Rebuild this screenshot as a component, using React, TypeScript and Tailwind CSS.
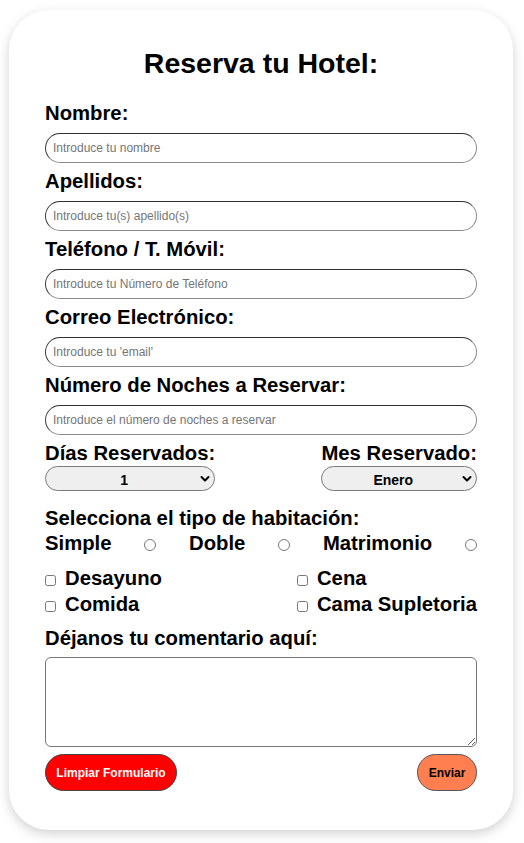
import React from "react";

const font = "font-['Liberation_Sans',Arial,Helvetica,sans-serif]";

function Chevron() {
  return (
    <svg
      className="pointer-events-none absolute right-[5px] top-1/2 -translate-y-1/2"
      width="10"
      height="7"
      viewBox="0 0 10 7"
      fill="none"
    >
      <path d="M1.5 1.5 L5 5 L8.5 1.5" stroke="#000" strokeWidth="2" strokeLinecap="round" strokeLinejoin="round" />
    </svg>
  );
}

function Field({ label, placeholder, first }: { label: string; placeholder: string; first?: boolean }) {
  return (
    <div className={first ? "mt-[23px]" : "mt-[7px]"}>
      <label className="block text-[20.3px] leading-[23px] font-bold text-black">{label}</label>
      <input
        type="text"
        placeholder={placeholder}
        className="mt-2 block h-[30px] w-full rounded-full border border-t-[#2e2e2e] border-l-[#3a3a3a] border-b-[#8a8a8a] border-r-[#8a8a8a] bg-white pl-[7px] text-[12px] text-black outline-none placeholder:text-[#757575]"
      />
    </div>
  );
}

export default function App() {
  return (
    <div className={`${font} min-h-[843px] w-[524px] bg-white pt-[10px]`}>
      <div className="ml-[9px] w-[504px] rounded-[40px] bg-white px-[36px] pt-[37px] pb-[39px] shadow-[0_4px_12px_rgba(0,0,0,0.18)]">
        <h1 className="text-center text-[28.5px] leading-[32px] font-bold text-black">Reserva tu Hotel:</h1>

        <Field first label="Nombre:" placeholder="Introduce tu nombre" />
        <Field label="Apellidos:" placeholder="Introduce tu(s) apellido(s)" />
        <Field label="Teléfono / T. Móvil:" placeholder="Introduce tu Número de Teléfono" />
        <Field label="Correo Electrónico:" placeholder="Introduce tu 'email'" />
        <Field label="Número de Noches a Reservar:" placeholder="Introduce el número de noches a reservar" />

        <div className="mt-[7px] flex justify-between">
          <div className="flex w-fit flex-col">
            <label className="text-[20.3px] leading-[23px] font-bold text-black">Días Reservados:</label>
            <div className="relative mt-[1px] h-[25px] w-full">
              <select className="h-[25px] w-full appearance-none rounded-full border border-[#7a7a7a] bg-[#efefef] pt-[3px] pr-[12px] text-center text-[14px] font-bold text-black outline-none">
                <option>1</option>
                <option>2</option>
                <option>3</option>
              </select>
              <Chevron />
            </div>
          </div>
          <div className="flex w-fit flex-col">
            <label className="text-[20.3px] leading-[23px] font-bold text-black">Mes Reservado:</label>
            <div className="relative mt-[1px] h-[25px] w-full">
              <select className="h-[25px] w-full appearance-none rounded-full border border-[#7a7a7a] bg-[#efefef] pt-[3px] pr-[12px] text-center text-[14px] font-bold text-black outline-none">
                <option>Enero</option>
                <option>Febrero</option>
              </select>
              <Chevron />
            </div>
          </div>
        </div>

        <div className="mt-[16px] text-[20.3px] leading-[23px] font-bold text-black">Selecciona el tipo de habitación:</div>
        <div className="mt-[2px] flex items-center justify-between text-[20.3px] leading-[23px] font-bold text-black">
          <span>Simple</span>
          <input type="radio" name="hab" className="mt-[3px] h-[12px] w-[12px]" />
          <span>Doble</span>
          <input type="radio" name="hab" className="mt-[3px] h-[12px] w-[12px]" />
          <span>Matrimonio</span>
          <input type="radio" name="hab" className="mt-[3px] h-[12px] w-[12px]" />
        </div>

        <div className="mt-[12px] flex justify-between text-[20.3px] leading-[23px] font-bold text-black">
          <div className="flex flex-col gap-[3px]">
            <label className="flex items-center">
              <input type="checkbox" className="mt-[3px] mr-[9px] h-[11px] w-[11px]" />
              Desayuno
            </label>
            <label className="flex items-center">
              <input type="checkbox" className="mt-[3px] mr-[9px] h-[11px] w-[11px]" />
              Comida
            </label>
          </div>
          <div className="flex flex-col gap-[3px]">
            <label className="flex items-center">
              <input type="checkbox" className="mt-[3px] mr-[9px] h-[11px] w-[11px]" />
              Cena
            </label>
            <label className="flex items-center">
              <input type="checkbox" className="mt-[3px] mr-[9px] h-[11px] w-[11px]" />
              Cama Supletoria
            </label>
          </div>
        </div>

        <div className="mt-[11px] text-[20.3px] leading-[23px] font-bold text-black">Déjanos tu comentario aquí:</div>
        <textarea className="mt-[7px] block h-[90px] w-full rounded-[6px] border border-[#767676] bg-white text-[13px] outline-none" />

        <div className="mt-[7px] flex justify-between">
          <button className="h-[37px] w-[132px] rounded-full border border-[#444] bg-[#ff0000] text-[12px] font-bold text-white">
            Limpiar Formulario
          </button>
          <button className="h-[37px] w-[60px] rounded-full border border-[#555] bg-[#ff7f50] text-[12px] font-bold text-black">
            Enviar
          </button>
        </div>
      </div>
    </div>
  );
}
